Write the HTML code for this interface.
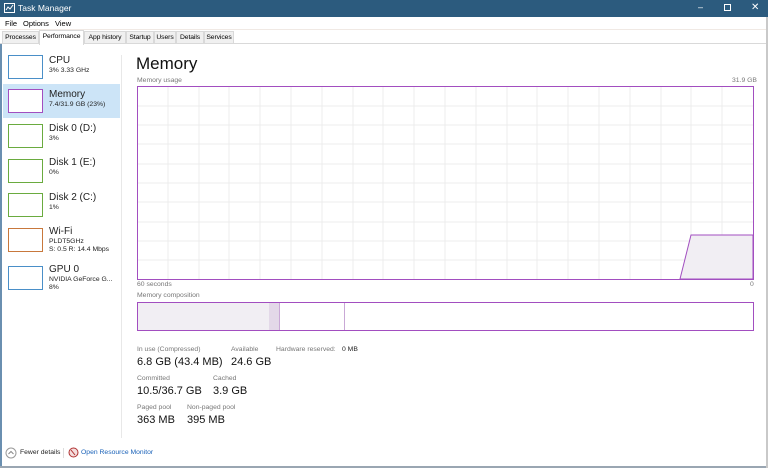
<!DOCTYPE html>
<html><head><style>
*{margin:0;padding:0;box-sizing:border-box}
body{width:768px;height:468px;overflow:hidden;background:#fff;font-family:"Liberation Sans",sans-serif;position:relative;color:#000}
.a{position:absolute;white-space:nowrap}
.title{left:0;top:0;width:768px;height:17px;background:#2c5b7e;color:#fff;font-size:8.5px}
.menu{top:17px;left:0;width:768px;height:13px;font-size:7.5px;border-bottom:1px solid #f0e9e4}
.tabs{top:30px;left:0;width:768px;height:14px;border-bottom:1px solid #d9d9d9;font-size:6.8px}
.tab{position:absolute;top:1px;height:13px;background:#f0f0f0;border:1px solid #d9d9d9;padding:2px 0 0;text-align:center;overflow:hidden;letter-spacing:-0.1px}
.side .box{position:absolute;left:8px;width:35px;height:24px;background:#fff}
.nm{font-size:10px;color:#222}
.sub{font-size:6.8px;color:#222}
.lbl{font-size:6.8px;color:#777}
.val{font-size:11px;color:#111}
</style></head><body>
<div class="a title"><svg style="position:absolute;left:4px;top:3px" width="11" height="10"><rect x="0.5" y="0.5" width="10" height="9" fill="none" stroke="#fff"/><path d="M2 7 L4 4 L6 6 L9 2" stroke="#fff" fill="none"/></svg><span style="position:absolute;left:18px;top:3px">Task Manager</span>
<span style="position:absolute;left:698px;top:2px;font-size:9px">–</span>
<span style="position:absolute;left:724px;top:4px;width:7px;height:7px;border:1px solid #fff"></span>
<span style="position:absolute;left:751px;top:2px;font-size:10px">✕</span></div>
<div class="a menu"><span class="a" style="left:5px;top:2px">File</span><span class="a" style="left:23px;top:2px">Options</span><span class="a" style="left:55px;top:2px">View</span></div>
<div class="a tabs">
<div class="tab" style="left:2px;width:37px">Processes</div>
<div class="tab" style="left:39px;top:0;width:45px;height:15px;background:#fff;border-bottom:none">Performance</div>
<div class="tab" style="left:84px;width:42px">App history</div>
<div class="tab" style="left:126px;width:28px">Startup</div>
<div class="tab" style="left:154px;width:22px">Users</div>
<div class="tab" style="left:176px;width:28px">Details</div>
<div class="tab" style="left:204px;width:30px">Services</div>
</div>
<div class="a" style="left:0;top:44px;width:2px;height:422px;background:#6a8fb0"></div>
<div class="a" style="left:121px;top:55px;width:1px;height:383px;background:#e8e8e8"></div>
<div class="a" style="left:3px;top:84px;width:117px;height:34px;background:#cce4f7"></div>
<div class="side">
<div class="box" style="top:55px;border:1px solid #4a8fc8"></div><div class="a nm" style="left:49px;top:55px">CPU</div><div class="a sub" style="left:49px;top:67px">3% 3.33 GHz</div>
<div class="box" style="top:89px;border:1px solid #a24ec0"></div><div class="a nm" style="left:49px;top:89px">Memory</div><div class="a sub" style="left:49px;top:101px">7.4/31.9 GB (23%)</div>
<div class="box" style="top:124px;border:1px solid #6aab3f"></div><div class="a nm" style="left:49px;top:123px">Disk 0 (D:)</div><div class="a sub" style="left:49px;top:135px">3%</div>
<div class="box" style="top:159px;border:1px solid #6aab3f"></div><div class="a nm" style="left:49px;top:157px">Disk 1 (E:)</div><div class="a sub" style="left:49px;top:169px">0%</div>
<div class="box" style="top:193px;border:1px solid #6aab3f"></div><div class="a nm" style="left:49px;top:192px">Disk 2 (C:)</div><div class="a sub" style="left:49px;top:204px">1%</div>
<div class="box" style="top:228px;border:1px solid #c8783c"></div><div class="a nm" style="left:49px;top:226px">Wi-Fi</div><div class="a sub" style="left:49px;top:238px">PLDT5GHz</div><div class="a sub" style="left:49px;top:246px">S: 0.5 R: 14.4 Mbps</div>
<div class="box" style="top:266px;border:1px solid #4a8fc8"></div><div class="a nm" style="left:49px;top:264px">GPU 0</div><div class="a sub" style="left:49px;top:276px">NVIDIA GeForce G...</div><div class="a sub" style="left:49px;top:284px">8%</div>
</div>
<div class="a" style="left:136px;top:54px;font-size:17px;color:#111">Memory</div>
<div class="a lbl" style="left:137px;top:77px">Memory usage</div>
<div class="a lbl" style="left:732px;top:77px">31.9 GB</div>
<svg class="a" style="left:137px;top:86px" width="617" height="194">
<g stroke="#ececec" stroke-width="1">
<path d="M31 0V194M62 0V194M92 0V194M123 0V194M154 0V194M185 0V194M216 0V194M246 0V194M277 0V194M308 0V194M339 0V194M370 0V194M400 0V194M431 0V194M462 0V194M493 0V194M524 0V194M554 0V194M585 0V194"/>
<path d="M0 20H617M0 39H617M0 58H617M0 78H617M0 97H617M0 116H617M0 136H617M0 155H617M0 174H617"/>
</g>
<path d="M543 193 L554 149 L616 149 L616 193Z" fill="#f1eef3" stroke="#a24ec0"/>
<rect x="0.5" y="0.5" width="616" height="193" fill="none" stroke="#a24ec0"/>
</svg>
<div class="a lbl" style="left:137px;top:281px">60 seconds</div>
<div class="a lbl" style="left:750px;top:281px">0</div>
<div class="a lbl" style="left:137px;top:292px">Memory composition</div>
<div class="a" style="left:137px;top:302px;width:617px;height:29px;border:1px solid #a24ec0">
<div class="a" style="left:0;top:0;width:131px;height:27px;background:#f1eef3"></div>
<div class="a" style="left:131px;top:0;width:11px;height:27px;background:#e3d8e8;border-right:1px solid #c9a8d6"></div>
<div class="a" style="left:206px;top:0;width:1px;height:27px;background:#c9a8d6"></div>
</div>
<div class="a lbl" style="left:137px;top:346px">In use (Compressed)</div>
<div class="a lbl" style="left:231px;top:346px">Available</div>
<div class="a lbl" style="left:276px;top:346px">Hardware reserved:</div>
<div class="a sub" style="left:342px;top:346px">0 MB</div>
<div class="a val" style="left:137px;top:356px">6.8 GB (43.4 MB)</div>
<div class="a val" style="left:231px;top:356px">24.6 GB</div>
<div class="a lbl" style="left:137px;top:375px">Committed</div>
<div class="a lbl" style="left:213px;top:375px">Cached</div>
<div class="a val" style="left:137px;top:385px">10.5/36.7 GB</div>
<div class="a val" style="left:213px;top:385px">3.9 GB</div>
<div class="a lbl" style="left:137px;top:404px">Paged pool</div>
<div class="a lbl" style="left:187px;top:404px">Non-paged pool</div>
<div class="a val" style="left:137px;top:414px">363 MB</div>
<div class="a val" style="left:187px;top:414px">395 MB</div>
<svg class="a" style="left:5px;top:447px" width="12" height="12"><circle cx="6" cy="6" r="5" fill="none" stroke="#999"/><path d="M3.5 7 L6 4.5 L8.5 7" fill="none" stroke="#888"/></svg>
<div class="a sub" style="left:20px;top:449px">Fewer details</div>
<div class="a" style="left:63px;top:448px;width:1px;height:10px;background:#ddd"></div>
<svg class="a" style="left:68px;top:447px" width="11" height="11"><circle cx="5.5" cy="5.5" r="4.5" fill="#f4dede" stroke="#b03030"/><path d="M3 3 L7 8" stroke="#b03030"/></svg>
<div class="a sub" style="left:81px;top:449px;color:#1a62b8">Open Resource Monitor</div>
<div class="a" style="left:0;top:466px;width:768px;height:2px;background:#9aa6b2"></div>
<div class="a" style="left:766px;top:17px;width:2px;height:451px;background:#c9c9c9"></div>
</body></html>
